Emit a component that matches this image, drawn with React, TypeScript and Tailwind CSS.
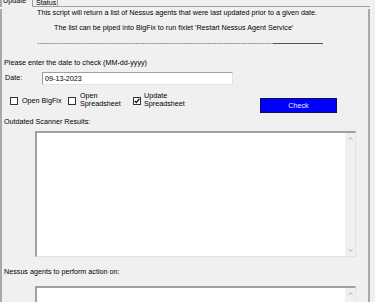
import React from "react";

function Box({ checked }: { checked?: boolean }) {
  return (
    <div className="mt-[5px] w-[8px] h-[8px] shrink-0 border border-[#333333] bg-white">
      {checked && (
        <svg width="6" height="6" viewBox="0 0 6 6" className="block">
          <polyline points="0.8,2.8 2.3,4.6 5.4,0.8" fill="none" stroke="#000" strokeWidth="1.3" />
        </svg>
      )}
    </div>
  );
}

function Chevron({ up }: { up?: boolean }) {
  return (
    <svg width="5" height="3" viewBox="0 0 5 3" className="block">
      <polyline
        points={up ? "0.5,2.6 2.5,0.6 4.5,2.6" : "0.5,0.4 2.5,2.4 4.5,0.4"}
        fill="none"
        stroke="#a6a6a6"
        strokeWidth="1"
      />
    </svg>
  );
}

function TextArea({ h }: { h: string }) {
  return (
    <div
      className={`ml-[33px] w-[321px] ${h} flex justify-end bg-white border-t-2 border-l-2 border-t-[#a0a0a0] border-l-[#a0a0a0] border-r border-b border-r-[#e3e3e3] border-b-[#e3e3e3]`}
    >
      <div className="w-[10px] h-full bg-[#f0f0f0] flex flex-col justify-between items-center pt-[4px] pb-[4px]">
        <Chevron up />
        <Chevron />
      </div>
    </div>
  );
}

export default function App() {
  return (
    <div className="w-[375px] h-[302px] overflow-hidden bg-[#f0f0f0] text-black text-[7.2px] leading-[8px] font-['Liberation_Sans',Arial,sans-serif]">
      {/* tab strip */}
      <div className="flex h-[7px] w-[370px]">
        <div className="w-[32px] h-[7px] border-l-2 border-[#a9a9a9] pl-[1px]">
          <div className="-mt-[3.5px] whitespace-nowrap">Update</div>
        </div>
        <div className="w-[26px] h-[7px] border-l border-r border-b border-[#a0a0a0] pl-[3px]">
          <div className="-mt-[1px] whitespace-nowrap">Status</div>
        </div>
        <div className="flex-1 h-[7px] border-b border-[#a0a0a0]" />
      </div>

      {/* tab page */}
      <div className="w-[370px] h-[295px] border-l-2 border-r-2 border-[#a9a9a9]">
        <div className="mt-[2px] ml-[35px] h-[8px] whitespace-nowrap">
          This script will return a list of Nessus agents that were last updated prior to a given date.
        </div>
        <div className="mt-[7px] ml-[52px] h-[8px] whitespace-nowrap">
          The list can be piped into BigFix to run fixlet 'Restart Nessus Agent Service'
        </div>
        <div className="mt-[7px] ml-[35px] flex h-[8px]">
          <div className="w-[236px] overflow-hidden whitespace-nowrap text-[#555555]">
            {"-".repeat(120)}
          </div>
          <div className="w-[50px] h-[1px] mt-[4px] bg-[#555555]" />
        </div>

        <div className="mt-[12px] ml-[2px] h-[8px] whitespace-nowrap">
          Please enter the date to check (MM-dd-yyyy)
        </div>
        <div className="mt-[5px] flex h-[13px]">
          <div className="ml-[3px] w-[37px] mt-[1.5px]">Date:</div>
          <div className="w-[191px] h-[13px] bg-white border-t border-l border-t-[#a0a0a0] border-l-[#a0a0a0] border-r border-b border-r-[#e3e3e3] border-b-[#e3e3e3] pl-[2px] pt-[1.5px]">
            09-13-2023
          </div>
        </div>

        <div className="mt-[7px] ml-[8px] flex h-[21px]">
          <div className="w-[58px] flex">
            <Box />
            <div className="ml-[4px] mt-[4.5px] whitespace-nowrap">Open BigFix</div>
          </div>
          <div className="w-[65px] flex">
            <Box />
            <div className="ml-[4px] whitespace-nowrap">
              Open
              <br />
              Spreadsheet
            </div>
          </div>
          <div className="w-[127px] flex">
            <Box checked />
            <div className="ml-[3px] whitespace-nowrap">
              Update
              <br />
              Spreadsheet
            </div>
          </div>
          <div className="mt-[6px] w-[77px] h-[15px] bg-[#0000ff] border border-[#10104a] text-[#eeeeff] flex items-center justify-center">
            Check
          </div>
        </div>

        <div className="mt-[5px] ml-[2px] h-[8px] whitespace-nowrap">Outdated Scanner Results:</div>
        <div className="mt-[5px]">
          <TextArea h="h-[126px]" />
        </div>

        <div className="mt-[11px] ml-[2px] h-[8px] whitespace-nowrap">Nessus agents to perform action on:</div>
        <div className="mt-[10px]">
          <TextArea h="h-[40px]" />
        </div>
      </div>
    </div>
  );
}
